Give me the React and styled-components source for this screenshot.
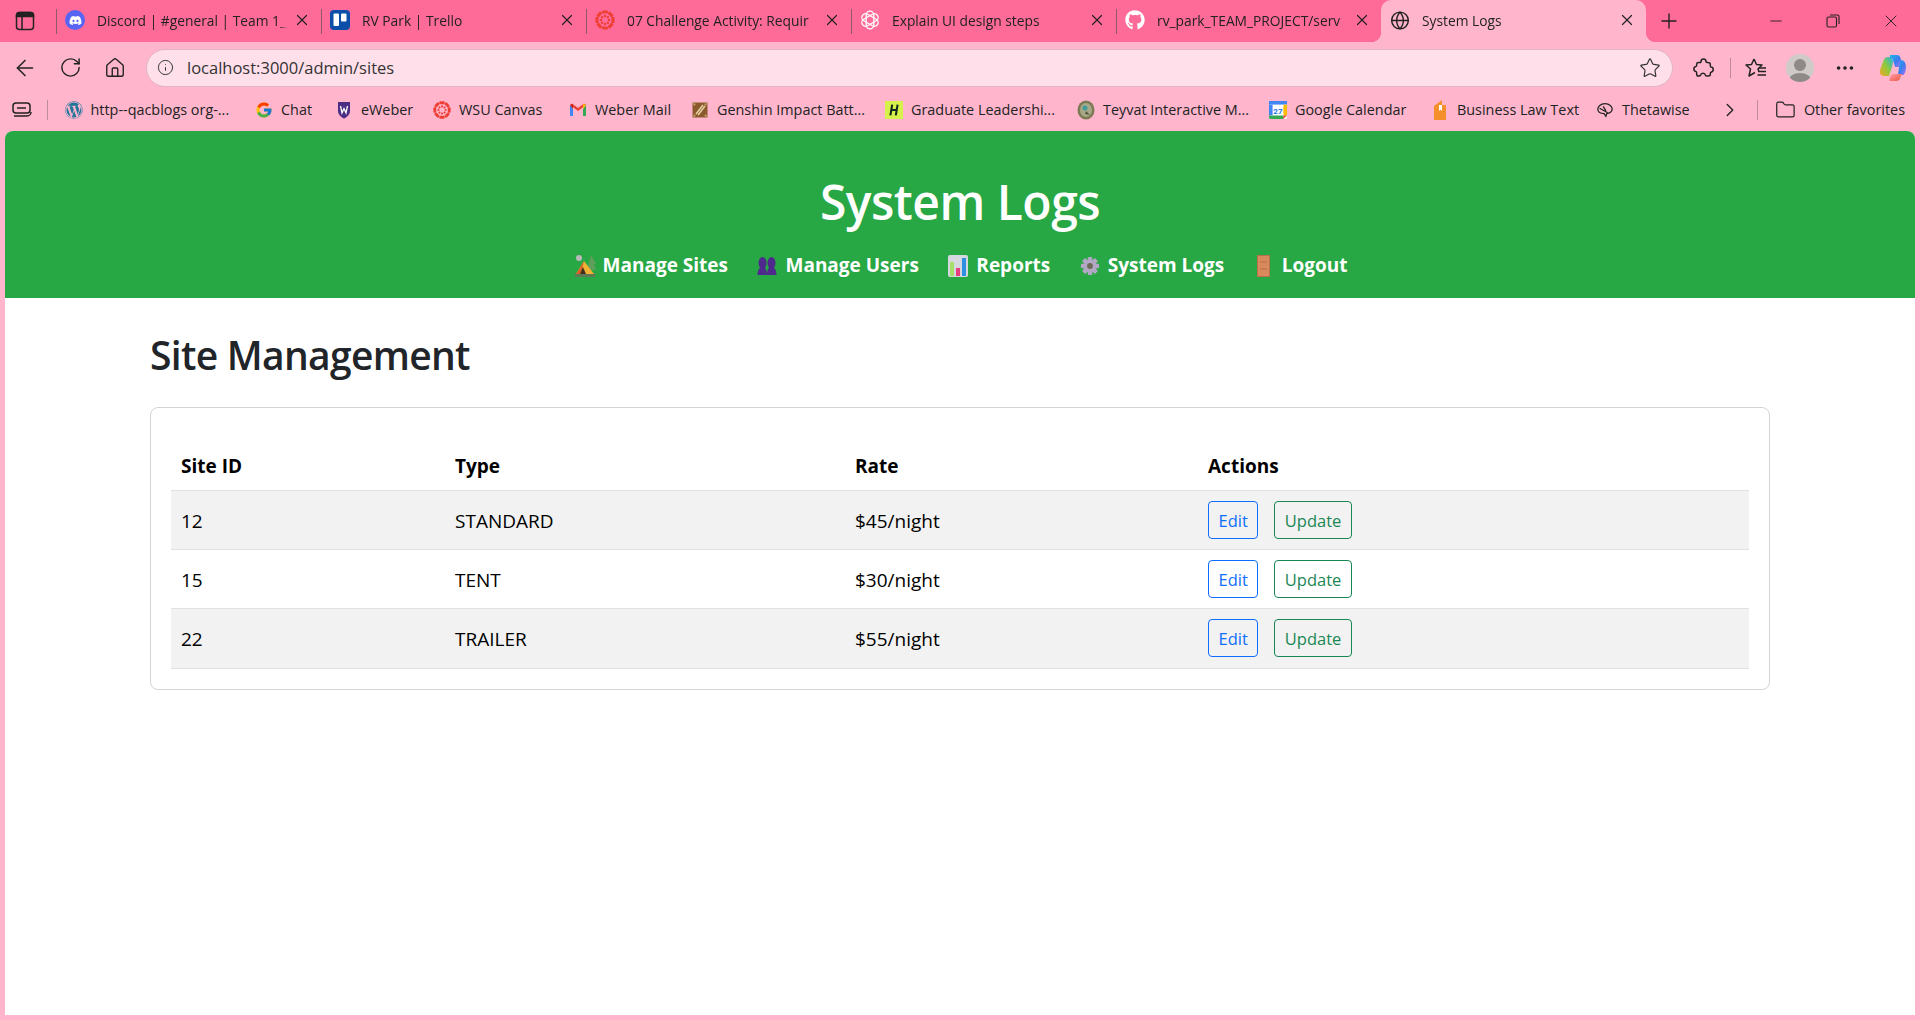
import React from 'react'
import styled, { createGlobalStyle } from 'styled-components'
import {
  ArrowLeft, RotateCw, House, Info, Star, Ellipsis, ChevronRight, Folder,
  Globe, Plus, X, Minus,
} from 'lucide-react'
import { FaDiscord, FaGithub, FaWordpress } from 'react-icons/fa'
import { FcGoogle } from 'react-icons/fc'

const UI_FONT = `"Open Sans", "Noto Sans", "Liberation Sans", sans-serif`

const GlobalStyle = createGlobalStyle`
  html, body {
    margin: 0;
    padding: 0;
    height: 100%;
  }
  body {
    background: #ffb6cd;
    font-family: ${UI_FONT};
    overflow: hidden;
  }
`

const Window = styled.div`
  width: 1920px;
  height: 1020px;
  display: flex;
  flex-direction: column;
  background: #ffb6cd;
`

/* tab strip */
const TabStrip = styled.div`
  height: 42px;
  flex: none;
  display: flex;
  align-items: stretch;
  background: #ff6b99;
  color: #222;
`

const PanelButton = styled.div`
  width: 56px;
  flex: none;
  display: flex;
  align-items: center;
  padding-left: 15px;
  box-sizing: border-box;
`

const Tab = styled.div`
  width: 265px;
  flex: none;
  box-sizing: border-box;
  position: relative;
  display: flex;
  align-items: center;
  padding: 0 10px 2px 9px;
  font-size: 13.8px;
  background: ${p => (p.$active ? '#ffb6cd' : 'transparent')};
  border-radius: ${p => (p.$active ? '10px 10px 0 0' : '0')};

  &::before {
    content: '';
    display: ${p => (p.$active ? 'none' : 'block')};
    position: absolute;
    left: 0;
    top: 9px;
    height: 25px;
    width: 1px;
    background: #8d5a6c;
  }
`

const TabFlare = styled.span`
  position: absolute;
  bottom: 0;
  width: 10px;
  height: 10px;
  ${p => (p.$side === 'left' ? 'left: -10px;' : 'right: -10px;')}
  background: radial-gradient(
    circle at ${p => (p.$side === 'left' ? '0 0' : '100% 0')},
    transparent 10px,
    #ffb6cd 10.5px
  );
`

const TabIcon = styled.span`
  width: 20px;
  height: 20px;
  flex: none;
  display: flex;
  align-items: center;
  justify-content: center;
`

const TabTitle = styled.span`
  flex: 1;
  min-width: 0;
  margin: 0 5px 0 12px;
  white-space: nowrap;
  overflow: hidden;
  -webkit-mask-image: linear-gradient(to right, #000 calc(100% - 10px), transparent);
  mask-image: linear-gradient(to right, #000 calc(100% - 10px), transparent);
`

const DiscordBadge = styled.span`
  width: 20px;
  height: 20px;
  border-radius: 50%;
  background: #5865f2;
  color: #fff;
  display: flex;
  align-items: center;
  justify-content: center;
`

const WindowControls = styled.div`
  margin-left: auto;
  display: flex;
  align-items: center;
  gap: 41px;
  padding-right: 19px;
`

const NewTab = styled.div`
  display: flex;
  align-items: center;
  margin-left: 11px;
`

/* toolbar */
const Toolbar = styled.div`
  height: 46px;
  flex: none;
  box-sizing: border-box;
  display: flex;
  align-items: center;
  padding: 5px 0 0 10px;
  color: #222;
`

const ToolIcon = styled.span`
  width: ${p => p.$w || 30}px;
  flex: none;
  display: flex;
  align-items: center;
  justify-content: center;
`

const AddressBar = styled.div`
  width: 1527px;
  height: 38px;
  flex: none;
  box-sizing: border-box;
  margin: 0 5px 0 16px;
  display: flex;
  align-items: center;
  padding: 0 11px 0 10px;
  background: #ffe0ea;
  border: 1px solid #e0b4c3;
  border-radius: 19px;
  font-size: 16.5px;
  color: #333;
`

const Url = styled.span`
  margin-left: 13px;
  flex: 1;
`

const ToolDivider = styled.span`
  width: 1px;
  height: 20px;
  background: #c08a9d;
  flex: none;
`

const Avatar = styled.span`
  width: 28px;
  height: 28px;
  margin-left: 5px;
  border-radius: 50%;
  background: #cfcac7;
  position: relative;
  overflow: hidden;
  flex: none;

  &::before {
    content: '';
    position: absolute;
    left: 8px;
    top: 5px;
    width: 12px;
    height: 12px;
    border-radius: 50%;
    background: #8f8a87;
  }
  &::after {
    content: '';
    position: absolute;
    left: 3px;
    top: 19px;
    width: 22px;
    height: 14px;
    border-radius: 50%;
    background: #8f8a87;
  }
`

/* bookmarks */
const BookmarkBar = styled.div`
  height: 43px;
  flex: none;
  display: flex;
  align-items: center;
  padding-left: 12px;
  font-size: 14.4px;
  color: #222;
`

const BookmarkDivider = styled.span`
  width: 1px;
  height: 20px;
  background: #c08a9d;
  flex: none;
  margin: 0 ${p => p.$right}px 0 ${p => p.$left}px;
`

const Bookmark = styled.div`
  width: ${p => p.$w}px;
  flex: none;
  display: flex;
  align-items: center;
  gap: 8px;
  white-space: nowrap;
`

const BookmarkIcon = styled.span`
  width: 18px;
  height: 18px;
  flex: none;
  display: flex;
  align-items: center;
  justify-content: center;
`

/* page */
const Page = styled.main`
  flex: 1;
  min-height: 0;
  margin: 0 5px 5px;
  background: #fff;
  border-radius: 8px 8px 0 0;
  overflow: hidden;
`

const Header = styled.header`
  background: #28a745;
  color: #fff;
  height: 167px;
  box-sizing: border-box;
  padding-top: 42px;
  text-align: center;
`

const SiteTitle = styled.h1`
  margin: 0 0 21px;
  font-size: 48px;
  line-height: 58px;
  font-weight: 600;
  letter-spacing: -0.5px;
`

const Nav = styled.nav`
  display: flex;
  justify-content: center;
  gap: 27.5px;
`

const NavLink = styled.a`
  display: flex;
  align-items: center;
  gap: 6px;
  color: #fff;
  font-size: 19px;
  line-height: 27px;
  font-weight: 700;
`

const NavIcon = styled.span`
  width: 24px;
  height: 24px;
  flex: none;
  display: flex;
  align-items: center;
  justify-content: center;
`

const Content = styled.div`
  width: 1620px;
  margin: 0 auto;
  padding-top: 33px;
`

const Heading = styled.h2`
  margin: 0 0 28px;
  font-size: 39px;
  line-height: 48px;
  font-weight: 600;
  letter-spacing: -0.7px;
  color: #212529;
`

const Card = styled.section`
  border: 1px solid #d4d4d4;
  border-radius: 8px;
  padding: 20px;
`

const Table = styled.table`
  width: 100%;
  margin-top: 20px;
  border-collapse: collapse;
  table-layout: fixed;
  color: #000;
  font-size: 19px;
`

const Th = styled.th`
  height: 42px;
  padding: 0 10px 6px;
  box-sizing: border-box;
  text-align: left;
  font-weight: 700;
  border-bottom: 1px solid #dee2e6;
`

const Row = styled.tr`
  background: ${p => (p.$striped ? '#f2f2f2' : '#fff')};
`

const Td = styled.td`
  height: 58.4px;
  padding: 0 10px;
  border-bottom: 1px solid #dee2e6;
`

const CellText = styled.span`
  position: relative;
  top: 1px;
`

const Actions = styled.div`
  display: flex;
  gap: 16px;
`

const OutlineButton = styled.button`
  height: 38px;
  padding: 1px 9.5px 0;
  background: transparent;
  border: 1px solid ${p => p.$color};
  border-radius: 4px;
  color: ${p => p.$color};
  font-family: inherit;
  font-size: 16.5px;
`

/* favicons and small drawings */
const PanelGlyph = () => (
  <svg width="20" height="20" viewBox="0 0 20 20" fill="none" stroke="#222" strokeWidth="1.500">
    <rect x="1.500" y="1.500" width="17" height="17" rx="3" />
    <path d="M1.500 5.500V4.500a3 3 0 0 1 3-3h11a3 3 0 0 1 3 3v1z" fill="#222" />
    <path d="M7 5.500v13" />
  </svg>
)

const RestoreGlyph = () => (
  <svg width="14" height="14" viewBox="0 0 14 14" fill="none" stroke="#222" strokeWidth="1.100">
    <rect x="1" y="3" width="9.500" height="10" rx="1.500" />
    <path d="M4 1h7.500A1.500 1.500 0 0 1 13 2.500V10" />
  </svg>
)

const SidebarGlyph = () => (
  <svg width="20" height="16" viewBox="0 0 20 16" fill="none" stroke="#222" strokeWidth="1.500">
    <rect x="1" y="1" width="17" height="10" rx="3" />
    <path d="M5 6h9M2 14h13a4 4 0 0 0 4-4" />
  </svg>
)

const CanvasIcon = ({ size = 20 }) => (
  <svg width={size} height={size} viewBox="0 0 20 20">
    <g fill="#ef4036">
      {[0, 45, 90, 135, 180, 225, 270, 315].map(a => (
        <g key={a} transform={`rotate(${a} 10 10)`}>
          <rect x="7" y="0.4" width="6" height="3.2" rx="1" />
          <circle cx="10" cy="6" r="1.2" />
        </g>
      ))}
    </g>
  </svg>
)

const TrelloIcon = () => (
  <svg width="20" height="20" viewBox="0 0 20 20">
    <rect width="20" height="20" rx="4" fill="#0c4fa8" />
    <rect x="3.5" y="3.5" width="5.5" height="12.5" rx="1" fill="#fff" />
    <rect x="11" y="3.5" width="5.5" height="8" rx="1" fill="#fff" />
  </svg>
)

const OpenAiIcon = () => (
  <svg width="20" height="20" viewBox="0 0 20 20" fill="none" stroke="#fff" strokeWidth="1.3">
    {[0, 60, 120].map(a => (
      <rect key={a} x="6.2" y="1.2" width="7.6" height="17.6" rx="3.8" transform={`rotate(${a} 10 10)`} />
    ))}
  </svg>
)

const WeberIcon = () => (
  <svg width="18" height="18" viewBox="0 0 18 18">
    <path d="M3 1h12v9c0 3.5-3 6-6 7.5C6 16 3 13.500 3 10z" fill="#4b2e83" />
    <path d="M5.500 5l1.500 7 2-4.500 2 4.500 1.500-7" fill="none" stroke="#fff" strokeWidth="1.300" />
  </svg>
)

const GmailIcon = () => (
  <svg width="18" height="18" viewBox="0 0 18 18">
    <path d="M1 4v11h3V8z" fill="#4285f4" />
    <path d="M14 8v7h3V4z" fill="#34a853" />
    <path d="M1 4l8 6 8-6-2-1.500-6 4.500-6-4.500z" fill="#ea4335" />
    <path d="M1 4l3 4V3z" fill="#c5221f" />
    <path d="M17 4l-3 4V3z" fill="#fbbc04" />
  </svg>
)

const GenshinIcon = () => (
  <svg width="18" height="18" viewBox="0 0 18 18">
    <rect x="1.500" y="1.500" width="15" height="15" fill="#8a5a2c" />
    <path d="M2 2l3 1-2 2zM16 2l-3 1 2 2zM2 16l3-1-2-2zM16 16l-3-1 2-2z" fill="#c9a36a" />
    <path d="M5 13L12 4M7 14l7-9" stroke="#e6cfa2" strokeWidth="1.500" />
  </svg>
)

const HIcon = () => (
  <svg width="20" height="20" viewBox="0 0 20 20">
    <rect width="20" height="20" fill="#d6f24a" />
    <path d="M8 4L6 16M14 4l-2 12M7 10h6" stroke="#10281c" strokeWidth="2.300" fill="none" />
  </svg>
)

const TeyvatIcon = () => (
  <svg width="18" height="20" viewBox="0 0 18 20">
    <ellipse cx="9" cy="10" rx="8.500" ry="9.500" fill="#7c7a55" />
    <ellipse cx="9" cy="10" rx="6" ry="7" fill="#a9a987" />
    <circle cx="8" cy="8" r="2.500" fill="#3f9c9a" />
    <path d="M9 11l4 4-5-1z" fill="#4f5a3a" />
  </svg>
)

const CalendarIcon = () => (
  <svg width="20" height="20" viewBox="0 0 20 20">
    <rect width="20" height="20" rx="2" fill="#fff" />
    <path d="M0 0h20v4H0z" fill="#4285f4" />
    <path d="M0 4h4v12H0z" fill="#4285f4" />
    <path d="M16 4h4v12h-4z" fill="#fbbc04" />
    <path d="M0 16h16v4H2a2 2 0 0 1-2-2z" fill="#34a853" />
    <path d="M16 16h4l-4 4z" fill="#ea4335" />
    <text x="10" y="14" fontSize="9" textAnchor="middle" fill="#1a73e8" fontFamily="Roboto, sans-serif" fontWeight="700">27</text>
  </svg>
)

const BookIcon = () => (
  <svg width="14" height="20" viewBox="0 0 14 20">
    <path d="M1 6l8-6v5h4v15H1z" fill="#f58f2c" />
    <path d="M6 5h3v6l-1.500-1.500L6 11z" fill="#fff" />
  </svg>
)

const ThetaIcon = () => (
  <svg width="20" height="20" viewBox="0 0 20 20" fill="none" stroke="#222" strokeWidth="1.400">
    <path d="M10 3c5 0 8 3 8 6s-3 5-6 5l-1 3-2-3C4 14 2 12 2 9s3-6 8-6z" />
    <path d="M4 8l9 5M8 6l3 5" />
  </svg>
)

const PuzzleBlob = () => (
  <svg width="22" height="22" viewBox="0 0 22 22" fill="none" stroke="#222" strokeWidth="1.500" strokeLinejoin="round">
    <path d="M8 4.500c0-3.500 5-3.500 5 0 0 .8 1 1.200 3 1.200.8 0 1.300.5 1.300 1.300 0 2-.2 2.800.7 3 3 .4 3 4.800 0 5.200-.9.200-.7 1-.7 2.300 0 1.300-1 1.500-2.300 1.500-1.500 0-2.300.2-2.500-.7-.5-2.600-4.500-2.600-5 0-.2.700-1 .7-2 .7-1.300 0-1.800-.7-1.800-1.800 0-1.500.2-2.400-.8-2.700-2.700-.5-2.700-4.500 0-5 1-.3.800-1.200.8-2.500 0-1 .7-1.500 1.800-1.500 1.500 0 2.500.2 2.500-.8z" />
  </svg>
)

const FavoritesIcon = () => (
  <svg width="24" height="22" viewBox="0 0 24 22" fill="none" stroke="#222" strokeWidth="1.500" strokeLinejoin="round">
    <path d="M10 2l2.500 5.500 5.500.5-4 4 1 3M10 2L7.500 7.500 2 8l4.500 4-1.500 7 6-3.500" />
    <path d="M15 11h7M14.500 14.500h7.500M13.500 18h8.500" />
  </svg>
)

const CopilotIcon = () => (
  <svg width="30" height="30" viewBox="0 0 30 30" style={{ marginLeft: 2 }}>
    <defs>
      <linearGradient id="copA" x1="0" y1="0" x2="1" y2="1">
        <stop offset="0" stopColor="#1fb6e8" />
        <stop offset="0.5" stopColor="#3a7df0" />
        <stop offset="1" stopColor="#b06ff0" />
      </linearGradient>
      <linearGradient id="copB" x1="0" y1="1" x2="1" y2="0">
        <stop offset="0" stopColor="#f4a62a" />
        <stop offset="0.5" stopColor="#8fc93a" />
        <stop offset="1" stopColor="#1fb6e8" />
      </linearGradient>
      <linearGradient id="copC" x1="0" y1="0" x2="1" y2="1">
        <stop offset="0" stopColor="#f9a" />
        <stop offset="1" stopColor="#ee5a3a" />
      </linearGradient>
    </defs>
    <path d="M12 2h7c2 0 3 1 3.500 3L25 14h-8l-2-7c-.5-1.500-1.500-2-3-2z" fill="url(#copA)" />
    <path d="M23 7c3 0 5 3 5 7 0 4-1 6-2.500 8H20l1-8z" fill="url(#copA)" />
    <path d="M10 4c-3 0-4 2-5 5l-3 8c-1 3 1 6 4 6h5l3-9c.5-2 1-4 1-6 0-2-2-4-5-4z" fill="url(#copB)" />
    <path d="M12 28h6c3 0 4-2 5-5l1-2h-8c-2 0-3 1-4 3-.5 2-1 4 0 4z" fill="url(#copC)" />
  </svg>
)

/* emoji drawn as small pictures for the nav */
const TentEmoji = () => (
  <svg width="22" height="24" viewBox="0 0 22 24">
    <circle cx="5" cy="4" r="3" fill="#b9b9b9" />
    <path d="M17 1l5 9h-2l2 6h-9z" fill="#5f9e5b" />
    <rect x="1" y="19" width="20" height="4" fill="#5d7a55" />
    <path d="M10 7l10 13H2z" fill="#f2b233" />
    <path d="M10 7L2 20h5z" fill="#d9622b" />
    <path d="M9 13l-3 7h6z" fill="#41301f" />
  </svg>
)

const UsersEmoji = () => (
  <svg width="20" height="20" viewBox="0 0 20 20" fill="#4d2a8c">
    <ellipse cx="5.500" cy="7" rx="4" ry="6" />
    <ellipse cx="14.500" cy="7" rx="4" ry="6" />
    <path d="M.5 19c0-5 2-8 5-8s4.500 3 4.500 8zM10 19c0-5 1.500-8 4.500-8s5 3 5 8z" />
  </svg>
)

const ChartEmoji = () => (
  <svg width="20" height="22" viewBox="0 0 20 22">
    <rect width="20" height="22" rx="2" fill="#d5d8df" />
    <rect x="2" y="7" width="4" height="14" fill="#a6e06a" />
    <rect x="8" y="13" width="4" height="8" fill="#e83e7f" />
    <rect x="14" y="3" width="4" height="18" fill="#2f8fe0" />
  </svg>
)

const GearEmoji = () => (
  <svg width="20" height="20" viewBox="0 0 22 22">
    <g fill="#b3a7c6">
      {[0, 45, 90, 135].map(a => (
        <rect key={a} x="8.500" y="1" width="5" height="20" rx="1" transform={`rotate(${a} 11 11)`} />
      ))}
    </g>
    <circle cx="11" cy="11" r="7" fill="#b3a7c6" />
    <circle cx="11" cy="11" r="3.200" fill="#6f6a57" />
  </svg>
)

const DoorEmoji = () => (
  <svg width="13" height="22" viewBox="0 0 13 22">
    <rect x="0.500" y="0.500" width="12" height="21" fill="#d98a5c" stroke="#b96f48" />
    <path d="M3 7h7M3 14h7" stroke="#b96f48" />
  </svg>
)

const tabs = [
  { title: 'Discord | #general | Team 1_', icon: <DiscordBadge><FaDiscord size={13} /></DiscordBadge> },
  { title: 'RV Park | Trello', icon: <TrelloIcon /> },
  { title: '07 Challenge Activity: Requir', icon: <CanvasIcon /> },
  { title: 'Explain UI design steps', icon: <OpenAiIcon /> },
  { title: 'rv_park_TEAM_PROJECT/serv', icon: <FaGithub size={20} color="#fff" /> },
  { title: 'System Logs', icon: <Globe size={21} strokeWidth={1.7} />, active: true },
]

const bookmarks = [
  { label: 'http--qacblogs org-...', icon: <FaWordpress size={18} color="#21759b" />, w: 190.5 },
  { label: 'Chat', icon: <FcGoogle size={18} />, w: 80 },
  { label: 'eWeber', icon: <WeberIcon />, w: 98 },
  { label: 'WSU Canvas', icon: <CanvasIcon size={18} />, w: 136 },
  { label: 'Weber Mail', icon: <GmailIcon />, w: 122 },
  { label: 'Genshin Impact Batt...', icon: <GenshinIcon />, w: 194 },
  { label: 'Graduate Leadershi...', icon: <HIcon />, w: 192 },
  { label: 'Teyvat Interactive M...', icon: <TeyvatIcon />, w: 192 },
  { label: 'Google Calendar', icon: <CalendarIcon />, w: 162 },
  { label: 'Business Law Text', icon: <BookIcon />, w: 165 },
  { label: 'Thetawise', icon: <ThetaIcon />, w: 123 },
]

const navItems = [
  { label: 'Manage Sites', icon: <TentEmoji /> },
  { label: 'Manage Users', icon: <UsersEmoji /> },
  { label: 'Reports', icon: <ChartEmoji /> },
  { label: 'System Logs', icon: <GearEmoji /> },
  { label: 'Logout', icon: <DoorEmoji /> },
]

const sites = [
  { id: 12, type: 'STANDARD', rate: '$45/night' },
  { id: 15, type: 'TENT', rate: '$30/night' },
  { id: 22, type: 'TRAILER', rate: '$55/night' },
]

export default function App() {
  return (
    <Window>
      <GlobalStyle />
      <TabStrip>
        <PanelButton><PanelGlyph /></PanelButton>
        {tabs.map(tab => (
          <Tab key={tab.title} $active={tab.active}>
            {tab.active && <TabFlare $side="left" />}
            {tab.active && <TabFlare $side="right" />}
            <TabIcon>{tab.icon}</TabIcon>
            <TabTitle>{tab.title}</TabTitle>
            <X size={18} strokeWidth={1.6} />
          </Tab>
        ))}
        <NewTab><Plus size={24} strokeWidth={1.4} /></NewTab>
        <WindowControls>
          <Minus size={18} strokeWidth={1.2} />
          <RestoreGlyph />
          <X size={20} strokeWidth={1.1} />
        </WindowControls>
      </TabStrip>

      <Toolbar>
        <ToolIcon><ArrowLeft size={26} strokeWidth={1.4} /></ToolIcon>
        <ToolIcon $w={60}><RotateCw size={23} strokeWidth={1.5} /></ToolIcon>
        <ToolIcon><House size={22} strokeWidth={1.5} /></ToolIcon>
        <AddressBar>
          <Info size={17} strokeWidth={1.4} />
          <Url>localhost:3000/admin/sites</Url>
          <Star size={22} strokeWidth={1.3} />
        </AddressBar>
        <ToolIcon $w={52}><PuzzleBlob /></ToolIcon>
        <ToolDivider />
        <ToolIcon $w={50}><FavoritesIcon /></ToolIcon>
        <Avatar />
        <ToolIcon $w={62}><Ellipsis size={22} strokeWidth={2} /></ToolIcon>
        <CopilotIcon />
      </Toolbar>

      <BookmarkBar>
        <SidebarGlyph />
        <BookmarkDivider $left={15} $right={16.5} />
        {bookmarks.map(b => (
          <Bookmark key={b.label} $w={b.w}>
            <BookmarkIcon>{b.icon}</BookmarkIcon>
            {b.label}
          </Bookmark>
        ))}
        <ChevronRight size={22} strokeWidth={1.5} />
        <BookmarkDivider $left={16} $right={17} />
        <Bookmark $w={130}>
          <Folder size={22} strokeWidth={1.4} />
          Other favorites
        </Bookmark>
      </BookmarkBar>

      <Page>
        <Header>
          <SiteTitle>System Logs</SiteTitle>
          <Nav>
            {navItems.map(item => (
              <NavLink key={item.label}><NavIcon>{item.icon}</NavIcon>{item.label}</NavLink>
            ))}
          </Nav>
        </Header>
        <Content>
          <Heading>Site Management</Heading>
          <Card>
            <Table>
              <colgroup>
                <col style={{ width: 274 }} />
                <col style={{ width: 400 }} />
                <col style={{ width: 353 }} />
                <col />
              </colgroup>
              <thead>
                <tr>
                  <Th>Site ID</Th>
                  <Th>Type</Th>
                  <Th>Rate</Th>
                  <Th>Actions</Th>
                </tr>
              </thead>
              <tbody>
                {sites.map((site, i) => (
                  <Row key={site.id} $striped={i % 2 === 0}>
                    <Td><CellText>{site.id}</CellText></Td>
                    <Td><CellText>{site.type}</CellText></Td>
                    <Td><CellText>{site.rate}</CellText></Td>
                    <Td>
                      <Actions>
                        <OutlineButton $color="#0d6efd">Edit</OutlineButton>
                        <OutlineButton $color="#198754">Update</OutlineButton>
                      </Actions>
                    </Td>
                  </Row>
                ))}
              </tbody>
            </Table>
          </Card>
        </Content>
      </Page>
    </Window>
  )
}
